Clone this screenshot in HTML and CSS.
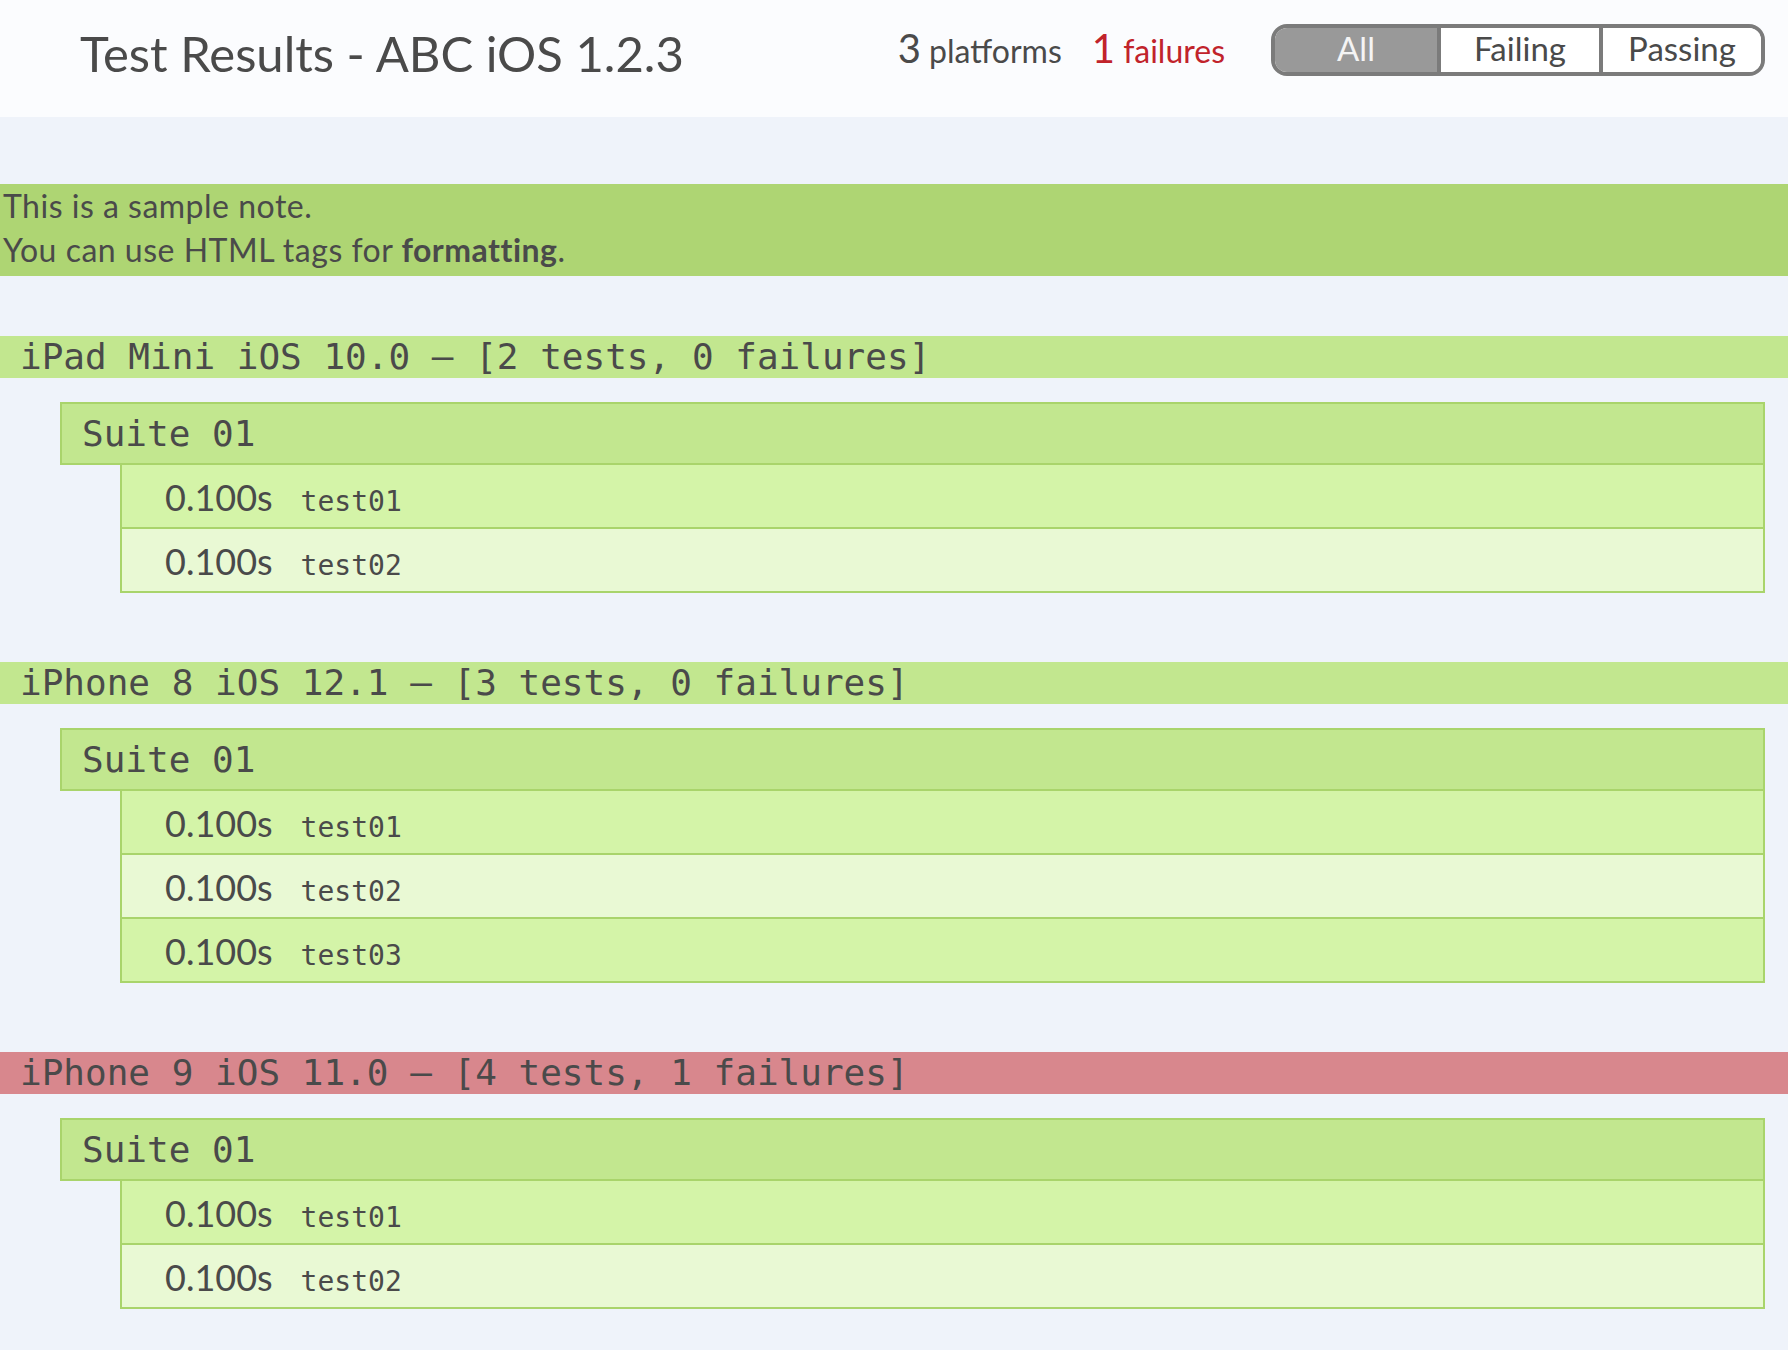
FILE: index.html
```html
<!DOCTYPE html>
<html lang="en">
<head>
<meta charset="utf-8">
<title>Test Results - ABC iOS 1.2.3</title>
<link rel="stylesheet" href="styles.css">
</head>
<body>
<header class="topbar">
  <h1 class="title">Test Results - ABC iOS 1.2.3</h1>
  <div class="summary">
    <span class="stat"><span class="num">3</span> platforms</span>
    <span class="stat stat-fail"><span class="num">1</span> failures</span>
  </div>
  <div class="segmented">
    <button class="seg seg-active">All</button>
    <button class="seg">Failing</button>
    <button class="seg">Passing</button>
  </div>
</header>

<main class="content">
  <div class="note">This is a sample note.<br>You can use HTML tags for <b>formatting</b>.</div>

  <section class="platform">
    <h2 class="platform-bar">iPad Mini iOS 10.0 – [2 tests, 0 failures]</h2>
    <div class="suite">
      <div class="suite-head">Suite 01</div>
      <div class="tests">
        <div class="test"><span class="time">0.100s</span><span class="name">test01</span></div>
        <div class="test test-alt"><span class="time">0.100s</span><span class="name">test02</span></div>
      </div>
    </div>
  </section>

  <section class="platform">
    <h2 class="platform-bar">iPhone 8 iOS 12.1 – [3 tests, 0 failures]</h2>
    <div class="suite">
      <div class="suite-head">Suite 01</div>
      <div class="tests">
        <div class="test"><span class="time">0.100s</span><span class="name">test01</span></div>
        <div class="test test-alt"><span class="time">0.100s</span><span class="name">test02</span></div>
        <div class="test"><span class="time">0.100s</span><span class="name">test03</span></div>
      </div>
    </div>
  </section>

  <section class="platform">
    <h2 class="platform-bar platform-fail">iPhone 9 iOS 11.0 – [4 tests, 1 failures]</h2>
    <div class="suite">
      <div class="suite-head">Suite 01</div>
      <div class="tests">
        <div class="test"><span class="time">0.100s</span><span class="name">test01</span></div>
        <div class="test test-alt"><span class="time">0.100s</span><span class="name">test02</span></div>
      </div>
    </div>
  </section>
</main>
</body>
</html>
```

FILE: styles.css
```css
* { box-sizing: border-box; }

body {
  margin: 0;
  background: #eff3fa;
  color: #4a4a4a;
  font-family: "Lato", "Open Sans", sans-serif;
}

.topbar {
  display: flex;
  align-items: flex-start;
  height: 117px;
  padding: 24px 23px 0 80px;
  background: #fbfcfe;
}

.title {
  flex: 1;
  margin: 5px 0 0 0;
  font-size: 49px;
  line-height: 48px;
  font-weight: 400;
  color: #4a4a4a;
}

.summary {
  display: flex;
  align-items: baseline;
  gap: 30px;
  margin: 4px 46px 0 0;
  font-size: 32px;
  line-height: 40px;
}

.stat .num { font-size: 40px; }
.stat-fail { color: #c1232b; }

.segmented {
  display: flex;
  height: 52px;
  border: 4px solid #7b7b7b;
  border-radius: 16px;
  overflow: hidden;
  background: #fff;
}

.seg {
  appearance: none;
  width: 162px;
  margin: 0;
  padding: 0 0 4px 0;
  border: 0;
  border-left: 4px solid #7b7b7b;
  background: #fff;
  color: #4a4a4a;
  font-family: "Lato", "Open Sans", sans-serif;
  font-size: 33px;
  line-height: 40px;
}

.seg:first-child { border-left: 0; }
.seg-active { background: #999; color: #f4f4f4; }

.content { padding-top: 67px; }

.note {
  margin-bottom: 60px;
  padding: 0 4px 4px 3px;
  background: #aed573;
  font-size: 32px;
  letter-spacing: 0.5px;
  line-height: 44px;
}

.platform { padding-bottom: 69px; }

.platform-bar {
  margin: 0;
  height: 42px;
  padding-left: 20px;
  background: #c2e78f;
  font-family: "DejaVu Sans Mono", monospace;
  font-size: 36px;
  line-height: 42px;
  font-weight: 400;
}

.platform-fail { background: #d8878d; }

.suite { margin: 24px 23px 0 60px; }

.suite-head {
  height: 63px;
  padding-left: 20px;
  border: 2px solid #a9d46b;
  background: #c2e78f;
  font-family: "DejaVu Sans Mono", monospace;
  font-size: 36px;
  line-height: 59px;
}

.tests { margin-left: 60px; }

.test {
  display: flex;
  align-items: baseline;
  height: 64px;
  padding: 2px 0 0 43px;
  border: 2px solid #a9d46b;
  border-top: 0;
  background: #d4f4a8;
  line-height: 60px;
}

.test-alt { background: #e9f9d4; }

.time { font-size: 36px; }

.name {
  margin-left: 28px;
  font-family: "DejaVu Sans Mono", monospace;
  font-size: 28px;
}
```
